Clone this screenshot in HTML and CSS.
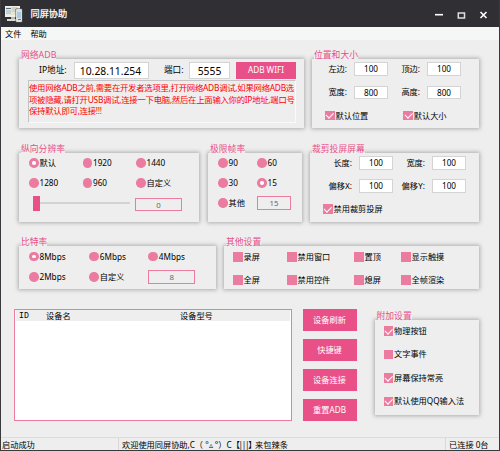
FILE: index.html
```html
<!DOCTYPE html>
<html lang="zh-CN">
<head>
<meta charset="utf-8">
<title>同屏协助</title>
<link rel="stylesheet" href="styles.css">
</head>
<body>
<div class="window">
  <header class="titlebar">
    <svg class="logo" width="20" height="20" viewBox="0 0 20 20">
      <rect x="1" y="2" width="15" height="11" fill="#f1efe6"/>
      <rect x="2" y="3" width="12" height="8" fill="#e9e5cf"/>
      <rect x="2" y="4" width="5" height="1" fill="#5c6d74"/>
      <rect x="2" y="6" width="5" height="4" fill="#b9d2df"/>
      <rect x="8" y="3" width="5" height="5" fill="#cfd3cb"/>
      <rect x="7" y="13" width="4" height="2" fill="#b3b6b5"/>
      <rect x="3" y="15" width="10" height="2" fill="#dadcda"/>
      <rect x="11.5" y="4.5" width="7" height="14" rx="1" fill="#55585a"/>
      <rect x="12" y="5" width="6" height="13" rx="1" fill="#dcdedd"/>
      <rect x="13" y="8" width="4" height="6" fill="#a9cbe8"/>
      <rect x="14" y="15" width="3" height="1" fill="#777"/>
    </svg>
    <h1 class="title">同屏协助</h1>
    <svg class="controls" width="54" height="12" viewBox="0 0 54 12">
      <path d="M1 5.7h8" stroke="#fff" stroke-width="1.6"/>
      <rect x="24.3" y="4" width="6.2" height="5" fill="none" stroke="#dedfe1" stroke-width="1.5"/>
      <path d="M46.5 3l6 6M52.5 3l-6 6" stroke="#fff" stroke-width="1.6"/>
    </svg>
  </header>
  <nav class="menu"><span>文件</span><span>帮助</span></nav>

  <main class="content">
    <div class="row row-top">
      <section class="panel adb">
        <h2>网络ADB</h2>
        <div class="adb-row">
          <label>IP地址:</label><span class="field big ip">10.28.11.254</span>
          <label class="port">端口:</label><span class="field big port-value">5555</span>
          <button class="btn">ADB WIFI</button>
        </div>
        <div class="notice">
          <p>使用网络ADB之前,需要在开发者选项里,打开网络ADB调试,如果网络ADB选</p>
          <p>项被隐藏,请打开USB调试,连接一下电脑,然后在上面输入你的IP地址,端口号</p>
          <p>保持默认即可,连接!!!</p>
        </div>
      </section>
      <section class="panel position">
        <h2>位置和大小</h2>
        <div class="fields">
          <label>左边:</label><span class="field">100</span><label>顶边:</label><span class="field">100</span>
          <label>宽度:</label><span class="field">800</span><label>高度:</label><span class="field">800</span>
        </div>
        <div class="checks">
          <span class="check on">默认位置</span><span class="check on">默认大小</span>
        </div>
      </section>
    </div>

    <div class="row row-mid">
      <section class="panel resolution">
        <h2>纵向分辨率</h2>
        <div class="options">
          <span class="radio on">默认</span><span class="radio">1920</span><span class="radio">1440</span>
          <span class="radio">1280</span><span class="radio">960</span><span class="radio">自定义</span>
        </div>
        <div class="slider-row">
          <span class="slider"><i></i></span><span class="outlined">0</span>
        </div>
      </section>
      <section class="panel fps">
        <h2>极限帧率</h2>
        <div class="options">
          <span class="radio">90</span><span class="radio">60</span>
          <span class="radio">30</span><span class="radio on">15</span>
          <span class="radio">其他</span><span class="outlined">15</span>
        </div>
      </section>
      <section class="panel crop">
        <h2>裁剪投屏屏幕</h2>
        <div class="fields">
          <label>长度:</label><span class="field">100</span><label>宽度:</label><span class="field">100</span>
          <label>偏移<b>X</b>:</label><span class="field">100</span><label>偏移<b>Y</b>:</label><span class="field">100</span>
        </div>
        <div class="checks"><span class="check on">禁用裁剪投屏</span></div>
      </section>
    </div>

    <div class="row row-low">
      <section class="panel bitrate">
        <h2>比特率</h2>
        <div class="options">
          <span class="radio on">8Mbps</span><span class="radio">6Mbps</span><span class="radio">4Mbps</span>
          <span class="radio">2Mbps</span><span class="radio">自定义</span><span class="outlined">8</span>
        </div>
      </section>
      <section class="panel other">
        <h2>其他设置</h2>
        <div class="options">
          <span class="check">录屏</span><span class="check">禁用窗口</span><span class="check">置顶</span><span class="check">显示触摸</span>
          <span class="check">全屏</span><span class="check">禁用控件</span><span class="check">熄屏</span><span class="check">全帧渲染</span>
        </div>
      </section>
    </div>

    <div class="row row-bottom">
      <div class="devices">
        <div class="devices-head"><span class="id">ID</span><span>设备名</span><span>设备型号</span></div>
      </div>
      <div class="actions">
        <button class="btn">设备刷新</button>
        <button class="btn">快捷键</button>
        <button class="btn">设备连接</button>
        <button class="btn">重置ADB</button>
      </div>
      <section class="panel extra">
        <h2>附加设置</h2>
        <span class="check on">物理按钮</span>
        <span class="check">文字事件</span>
        <span class="check on">屏幕保持常亮</span>
        <span class="check on">默认使用QQ输入法</span>
      </section>
    </div>
  </main>

  <footer class="status">
    <span>启动成功</span><span>欢迎使用同屏协助,C（ °▵ °）C<em>【|||】</em>来包辣条</span><span>已连接 0台</span>
  </footer>
</div>
</body>
</html>
```
FILE: styles.css
```css
* , *::before, *::after { box-sizing: border-box; }
body {
  margin: 0;
  font: 8.2px/12px "Noto Sans", "Noto Sans CJK SC", sans-serif;
  color: #000;
}
h1, h2, p { margin: 0; font-weight: 400; }
b { font-family: "Liberation Mono", monospace; font-weight: 400; }
.window {
  width: 500px; height: 451px;
  display: flex; flex-direction: column;
  background: #eee;
  border: solid #3a393e; border-width: 0 1px 1px;
  overflow: hidden; white-space: nowrap;
}
.titlebar {
  height: 27px; flex: none; margin: 0 -1px;
  display: flex; align-items: center;
  background: #302f34; color: #fff;
}
.logo { margin: 0 0 0 4px; }
.title { font-size: 9.2px; margin-left: 6.5px; -webkit-text-stroke: .25px #fff; }
.controls { margin: 2px 12px 0 auto; }
.menu {
  height: 13px; flex: none;
  display: flex; gap: 9px; padding-left: 4px; line-height: 14px;
  background: #f5f7f6;
}
.content { flex: 1; padding: 19px 0 0 18px; }
.row { display: flex; }
.row-top { height: 94px; gap: 8px; }
.row-mid { height: 93px; gap: 8px; }
.row-low { height: 63px; gap: 8px; }
.row-bottom { margin-left: -5px; }

.panel { position: relative; flex: none; box-shadow: 0 0 4px 1px rgba(0, 0, 0, .27); background: #eee; }
.panel h2 {
  position: absolute; left: 2px; top: -10px;
  height: 11px; line-height: 12px; font-size: 8.8px;
  color: #e85088; background: #eee;
}
.row-top .panel, .row-mid .panel { height: 69px; }
.row-low .panel { height: 43px; }

.field {
  height: 13.5px; line-height: 11.5px; text-align: center;
  background: #fff; border: 1px solid #d4d4d4;
}
.big { height: 17px; line-height: 16px; font-size: 10.3px; }
.ip { padding-right: 2px; }
.btn {
  border: 0; padding: 0; background: #ea5088; color: #fff;
  font: inherit; font-size: 8.2px;
}
.outlined {
  height: 13.5px; line-height: 12px; text-align: center; font-size: 7.8px;
  border: 1px solid #ec7ba0; color: #666;
}
.radio, .check { display: flex; align-items: center; gap: 1px; }
.radio::before {
  content: ""; width: 9.5px; height: 9.5px; flex: none;
  border-radius: 50%; background: #ec7ba0;
}
.radio.on::before { background: #fff; border: 3px solid #ec7ba0; }
.check::before { content: ""; width: 9.5px; height: 9.5px; flex: none; background: #ec7ba0; }
.check.on { position: relative; }
.check.on::after {
  content: ""; position: absolute; left: 1.3px; top: calc(50% - 3.2px);
  width: 7px; height: 4.5px;
  border: solid #fff; border-width: 0 0 1.5px 1.5px;
  transform: rotate(-45deg);
}

.adb { width: 285px; padding: 2px 8px 0 9px; }
.adb-row { display: grid; grid-template-columns: 46px 75px 15px 25px 41px 6px 60px; align-items: center; height: 18px; }
.adb-row label { padding-left: 11px; font-size: 8.6px; }
.adb-row .port { grid-column: 3 / 5; }
.port-value { grid-column: 5; }
.adb-row .port { padding-left: 15px; }
.adb-row .btn { grid-column: 7; height: 17px; }
.notice {
  width: 268px; height: 43px; margin-top: 1px; padding: 1px 0 0;
  border: solid; border-width: 1px; border-color: #c4c4c4 #fafafa #fafafa #c4c4c4;
  color: #f00; font-size: 8.4px; letter-spacing: -.27px; line-height: 11.5px;
}
.position { width: 167px; }
.fields {
  display: grid; grid-template-rows: 23.5px 23.5px;
  align-items: center; margin-top: -2px;
}
.fields label { text-align: right; padding-right: 7px; }
.position .fields { padding-left: 8px; grid-template-columns: 34px 34px 39px 34px; }
.checks { display: flex; align-items: center; height: 23px; }
.position .checks { padding-left: 13px; gap: 35px; }

.options { display: grid; align-items: center; }
.resolution { width: 180px; padding-left: 10px; }
.resolution .options { grid-template: 20px 20px / 53.5px 53.5px 60px; }
.slider-row { display: flex; align-items: center; height: 23px; }
.slider { width: 97px; height: 2px; margin: -3px 5px 0 4px; display: flex; align-items: center; background: #d2d2d2; }
.slider i { width: 7px; height: 15px; background: #ea5088; flex: none; }
.slider-row .outlined { width: 47px; }
.fps { width: 94px; margin-left: 1px; padding-left: 10px; }
.fps .options { grid-template: 20px 20px 20px / 39px 34px; }
.crop { width: 169px; }
.crop .fields { padding-left: 8px; grid-template: 23.5px 23px / 41px 34px 39px 34px; }
.crop .checks { padding-left: 13px; }

.bitrate { width: 197px; padding-left: 10px; }
.bitrate .options { grid-template: 21px 20px / 60.3px 59px 47px; }
.other { width: 255px; padding-left: 9px; }
.other .options { grid-template: 22px 24px / 54px 67px 47px 60px; }

.devices { width: 278px; height: 112px; padding: 0 1px; background: #fff; border: 1px solid #ec7ba0; }
.devices-head { display: grid; grid-template-columns: 27px 134px 1fr; height: 11px; line-height: 12px; padding-left: 3px; background: #eee; }
.id { font-family: "Liberation Mono", monospace; }
.actions { display: flex; flex-direction: column; gap: 8.5px; margin-left: 10.5px; }
.actions .btn { width: 54px; height: 21.5px; }
.extra { width: 104px; height: 95px; margin: 11px 0 0 18px; padding-left: 9px; }
.extra .check { height: 23.5px; }
.extra h2 + .check { margin-top: -1px; }

.status {
  height: 13px; flex: none; display: grid; grid-template-columns: 117px 327px 1fr;
  line-height: 13px; border-top: 1px solid #dcdcdc;
}
.status span { padding-left: 1px; }
.status span + span { padding-left: 3px; border-left: 1px solid #d8d8d8; }
.status em { font-style: normal; letter-spacing: -1.3px; }
```
